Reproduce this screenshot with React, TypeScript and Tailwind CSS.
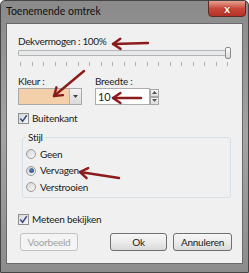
import React from "react";

const font = { fontFamily: 'Lato, "Noto Sans", sans-serif' };

function Check() {
  return (
    <div className="w-[11px] h-[11px] border border-[#8e8f8f] bg-gradient-to-br from-[#d8d8d8] to-[#f7f7f7] flex items-center justify-center">
      <svg width="9" height="9" viewBox="0 0 9 9">
        <path d="M1.3 4.6 L3.6 7.3 L7.8 1.3" fill="none" stroke="#3b4d87" strokeWidth="1.5" />
      </svg>
    </div>
  );
}

function Radio({ on }: { on?: boolean }) {
  return (
    <div className="w-[10px] h-[10px] rounded-full border border-[#9a9a9a] bg-gradient-to-br from-[#d4d4d4] to-[#fafafa] flex items-center justify-center">
      {on && <div className="w-[5px] h-[5px] rounded-full bg-gradient-to-br from-[#6c8fc4] to-[#2a4c83]" />}
    </div>
  );
}

function Arrow({ x1, y1, x2, y2 }: { x1: number; y1: number; x2: number; y2: number }) {
  const ang = Math.atan2(y2 - y1, x2 - x1);
  const l = 9;
  const a1 = ang + Math.PI - 0.6;
  const a2 = ang + Math.PI + 0.6;
  return (
    <g stroke="#8c1c1c" strokeWidth="2.4" strokeLinecap="round" strokeLinejoin="round" fill="none">
      <line x1={x1} y1={y1} x2={x2} y2={y2} />
      <polyline
        points={`${x2 + l * Math.cos(a1)},${y2 + l * Math.sin(a1)} ${x2},${y2} ${x2 + l * Math.cos(a2)},${y2 + l * Math.sin(a2)}`}
      />
    </g>
  );
}

export default function App() {
  const ticks = Array.from({ length: 19 }, (_, i) => i);
  return (
    <div
      className="relative w-[249px] h-[273px] overflow-hidden rounded-t-[5px] bg-gradient-to-b from-[#8a8a8a] via-[#a4a4a4] to-[#8c8c8c] border border-[#454545] text-[10px] tracking-[-0.25px] text-[#1b1b1b]"
      style={font}
    >
      {/* title bar */}
      <div className="h-[22px] flex items-center pl-[5px] text-[10.5px] tracking-normal text-[#101010]">
        Toenemende omtrek
      </div>
      <div className="absolute top-[-1px] right-[2px] w-[38px] h-[17px] rounded-b-[4px] border border-[#5e2a24] bg-gradient-to-b from-[#e6a08f] via-[#c8483a] to-[#b63226] flex items-center justify-center">
        <span className="text-white font-bold text-[11px] leading-none" style={{ textShadow: "0 0 2px #5a1a10" }}>
          x
        </span>
      </div>

      {/* client area */}
      <div className="mx-[5px] h-[241px] bg-[#f0f0f0] border border-[#6a6a6a] pl-[11px] pt-[9px] flex flex-col">
        <div className="h-[16px] leading-[16px] tracking-[-0.35px]">Dekvermogen : 100%</div>
        {/* slider */}
        <div className="relative mt-[1px] h-[6px] w-[211px] border border-[#b5b5b5] bg-[#e7eaea] rounded-[1px]">
          <div className="absolute right-[-3px] top-[-4px] w-[6px] h-[12px] rounded-[2px] border border-[#8b8b8b] bg-gradient-to-b from-[#fdfdfd] to-[#d8d8d8]" />
        </div>
        <div className="mt-[6px] w-[212px] flex justify-between px-[2px] h-[4px]">
          {ticks.map((i) => (
            <div key={i} className="w-px h-[4px] bg-[#b0b0b0]" />
          ))}
        </div>

        <div className="mt-[9px] flex">
          <div className="w-[77px]">
            <div className="h-[13px] leading-[13px]">Kleur :</div>
            <div className="flex h-[17px] w-[64px] border border-[#a9a9a9]">
              <div className="flex-1 bg-[#f3cfaa]" />
              <div className="w-[12px] bg-gradient-to-b from-[#f4f4f4] to-[#dadada] border-l border-[#b5b5b5] flex items-center justify-center">
                <svg width="5" height="3" viewBox="0 0 5 3">
                  <path d="M0 0 L5 0 L2.5 3 Z" fill="#444" />
                </svg>
              </div>
            </div>
          </div>
          <div>
            <div className="h-[13px] leading-[13px]">Breedte :</div>
            <div className="flex items-center">
              <div className="h-[17px] w-[55px] border border-[#abadb3] bg-white pl-[2px] leading-[15px] text-[11px]">10</div>
              <div className="flex flex-col w-[9px] h-[16px]">
                <div className="h-[8px] border border-[#a6a6a6] bg-gradient-to-b from-[#f6f6f6] to-[#dedede] flex items-center justify-center">
                  <svg width="5" height="3" viewBox="0 0 5 3"><path d="M0 3 L5 3 L2.5 0 Z" fill="#555" /></svg>
                </div>
                <div className="h-[8px] border border-[#a6a6a6] bg-gradient-to-b from-[#f6f6f6] to-[#dedede] flex items-center justify-center">
                  <svg width="5" height="3" viewBox="0 0 5 3"><path d="M0 0 L5 0 L2.5 3 Z" fill="#555" /></svg>
                </div>
              </div>
            </div>
          </div>
        </div>

        <div className="mt-[7px] flex items-center gap-[3px] h-[12px]">
          <Check />
          <span>Buitenkant</span>
        </div>

        {/* group box */}
        <div className="relative mt-[13px] ml-[4px] w-[209px] h-[61px] border border-[#d5dfe5] rounded-[3px] pl-[3px] pt-[8px] flex flex-col">
          <div className="absolute top-[-8px] left-[3px] px-[2px] bg-[#f0f0f0] leading-[14px]">Stijl</div>
          <div className="flex items-center gap-[4px] h-[16.5px]">
            <Radio />
            <span>Geen</span>
          </div>
          <div className="flex items-center gap-[4px] h-[16.5px]">
            <Radio on />
            <span>Vervagen</span>
          </div>
          <div className="flex items-center gap-[4px] h-[16.5px]">
            <Radio />
            <span>Verstrooien</span>
          </div>
        </div>

        <div className="mt-[15px] flex items-center gap-[3px] h-[12px]">
          <Check />
          <span>Meteen bekijken</span>
        </div>

        <div className="mt-[8px] flex items-center">
          <div className="ml-[2px] w-[58px] h-[18px] border border-[#c2c2c2] rounded-[3px] bg-[#f4f4f4] text-[#a3a3a3] flex items-center justify-center">
            Voorbeeld
          </div>
          <div className="ml-[32px] w-[57px] h-[18px] border border-[#707070] rounded-[3px] bg-gradient-to-b from-[#f6f6f6] via-[#ececec] to-[#d9d9d9] flex items-center justify-center">
            Ok
          </div>
          <div className="ml-[6px] w-[59px] h-[18px] border border-[#707070] rounded-[3px] bg-gradient-to-b from-[#f6f6f6] via-[#ececec] to-[#d9d9d9] flex items-center justify-center">
            Annuleren
          </div>
        </div>
      </div>

      {/* annotation arrows */}
      <svg className="absolute inset-0 pointer-events-none" width="249" height="273">
        <Arrow x1={147} y1={42} x2={112} y2={43} />
        <Arrow x1={83} y1={70} x2={53} y2={95} />
        <Arrow x1={140} y1={97} x2={112} y2={97} />
        <Arrow x1={118} y1={177} x2={79} y2={171} />
      </svg>
    </div>
  );
}
